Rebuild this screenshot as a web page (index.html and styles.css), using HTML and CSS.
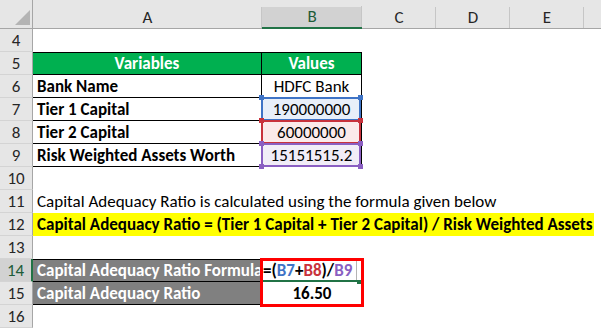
FILE: index.html
```html
<!DOCTYPE html>
<html lang="en">
<head>
  <meta charset="UTF-8" />
  <title>Capital Adequacy Ratio</title>
  <link rel="stylesheet" href="styles.css">
</head>
<body>
  <div class="sheet">
    <!-- column headers -->
    <div class="corner"><span class="tri"></span></div>
    <div class="colhead">A</div>
    <div class="colhead active">B</div>
    <div class="colhead">C</div>
    <div class="colhead">D</div>
    <div class="colhead">E</div>
    <div class="colhead last"></div>

    <div class="rowhead">4</div>
    <div class="c rest-a"></div>

    <div class="rowhead">5</div>
    <div class="c th top">Variables</div>
    <div class="c th top b">Values</div>
    <div class="c rest"></div>

    <div class="rowhead">6</div>
    <div class="c label">Bank Name</div>
    <div class="c val b">HDFC Bank</div>
    <div class="c rest"></div>

    <div class="rowhead">7</div>
    <div class="c label">Tier 1 Capital</div>
    <div class="c val b ref-cell blue-fill">190000000<span class="ref blue"><i class="tl"></i><i class="tr"></i><i class="bl"></i><i class="br"></i></span></div>
    <div class="c rest"></div>

    <div class="rowhead">8</div>
    <div class="c label">Tier 2 Capital</div>
    <div class="c val b ref-cell red-fill">60000000<span class="ref red"><i class="tl"></i><i class="tr"></i><i class="bl"></i><i class="br"></i></span></div>
    <div class="c rest"></div>

    <div class="rowhead">9</div>
    <div class="c label">Risk Weighted Assets Worth</div>
    <div class="c val b ref-cell purple-fill">15151515.2<span class="ref purple"><i class="tl"></i><i class="tr"></i><i class="bl"></i><i class="br"></i></span></div>
    <div class="c rest"></div>

    <div class="rowhead">10</div>
    <div class="c rest-a"></div>

    <div class="rowhead">11</div>
    <div class="c rest-a note">Capital Adequacy Ratio is calculated using the formula given below</div>

    <div class="rowhead">12</div>
    <div class="c rest-a"><span class="formula-note">Capital Adequacy Ratio = (Tier 1 Capital + Tier 2 Capital) / Risk Weighted Assets</span></div>

    <div class="rowhead">13</div>
    <div class="c rest-a"></div>

    <div class="rowhead active">14</div>
    <div class="c dark top">Capital Adequacy Ratio Formula</div>
    <div class="c edit">=(<span class="r-blue">B7</span>+<span class="r-red">B8</span>)/<span class="r-purple">B9</span><span class="caret"></span><span class="outline"></span><span class="handle"></span></div>
    <div class="c rest"></div>

    <div class="rowhead">15</div>
    <div class="c dark">Capital Adequacy Ratio</div>
    <div class="c result">16.50</div>
    <div class="c rest"></div>

    <div class="rowhead">16</div>
    <div class="c rest-a"></div>
  </div>
</body>
</html>
```

FILE: styles.css
```css
* {
  box-sizing: border-box;
}

body {
  margin: 0;
  background: #fff;
  font-family: Calibri, Carlito, Lato, "Liberation Sans", sans-serif;
  font-size: 17px;
  color: #000;
  overflow: hidden;
}

.sheet {
  display: grid;
  grid-template-columns: 33px 229px 100px 74px 74px 74px 1fr;
  grid-template-rows: 29px;
  grid-auto-rows: 23px;
  width: 601px;
}

/* headers */
.corner {
  background: #e6e6e6;
  border-right: 1px solid #a6a6a6;
  border-bottom: 1px solid #a6a6a6;
  display: flex;
  justify-content: flex-end;
  align-items: flex-end;
  padding: 0 2px 3px 0;
}

.tri {
  width: 0;
  height: 0;
  border-left: 15px solid transparent;
  border-bottom: 15px solid #b4b4b4;
}

.colhead {
  background: linear-gradient(#c6c6c6, #c6c6c6) right bottom / 1px 21px no-repeat, #e6e6e6;
  border-bottom: 1px solid #a6a6a6;
  display: flex;
  align-items: center;
  justify-content: center;
  padding-top: 6px;
  color: #262626;
}

.colhead.active {
  background: linear-gradient(#c6c6c6, #c6c6c6) right bottom / 1px 21px no-repeat,
              linear-gradient(#e6e6e6 7px, #d2d2d2 7px);
  border-bottom: 2px solid #217346;
  color: #1e5c38;
}

.colhead.last {
  background: #e6e6e6;
}

.rowhead {
  background: #e6e6e6;
  border-right: 1px solid #a6a6a6;
  border-bottom: 1px solid #d4d4d4;
  display: flex;
  align-items: center;
  justify-content: center;
  color: #262626;
}

.rowhead.active {
  background: #d2d2d2;
  border-right: 2px solid #217346;
  color: #1e5c38;
}

/* cells */
.c {
  display: flex;
  align-items: center;
  padding: 0 4px;
  white-space: nowrap;
  overflow: hidden;
  position: relative;
}

.rest {
  grid-column: 3 / -1;
}

.c.b ~ .rest,
.edit ~ .rest,
.result ~ .rest {
  grid-column: 4 / -1;
}

.rest-a {
  grid-column: 2 / -1;
  padding: 0;
}

.th {
  background: #00b050;
  color: #fff;
  font-weight: bold;
  justify-content: center;
  border-bottom: 1px solid #000;
  border-right: 1px solid #000;
}

.top {
  border-top: 1px solid #000;
}

.label {
  font-weight: bold;
  border-bottom: 1px solid #000;
  border-right: 1px solid #000;
}

.val {
  justify-content: center;
  border-bottom: 1px solid #000;
  border-right: 1px solid #000;
}

.ref-cell {
  overflow: visible;
}

.blue-fill { background: #e8eff9; }
.red-fill { background: #fbeaea; }
.purple-fill { background: #f1edf7; }

.ref {
  position: absolute;
  top: -1px;
  left: -1px;
  right: 0;
  bottom: -1px;
  border: 2px solid;
  z-index: 1;
}

.ref i {
  position: absolute;
  width: 5px;
  height: 5px;
  background: currentColor;
}

.ref .tl { top: -4px; left: -4px; }
.ref .tr { top: -4px; right: -4px; }
.ref .bl { bottom: -4px; left: -4px; }
.ref .br { bottom: -4px; right: -4px; }

.blue { color: #3f74c6; }
.red { color: #c8323c; }
.purple { color: #8a5fc2; }

.ref.red { z-index: 2; }
.ref.purple { z-index: 3; }

.note {
  padding-left: 4px;
  overflow: visible;
}

.formula-note {
  display: flex;
  align-items: center;
  height: 100%;
  margin-right: 7px;
  padding-left: 4px;
  background: #ffff00;
  font-weight: bold;
  flex: 1;
}

.dark {
  background: #808080;
  color: #fff;
  font-weight: bold;
  border-bottom: 1px solid #000;
  border-right: 1px solid #000;
}

.edit {
  font-weight: bold;
  padding-left: 1px;
  overflow: visible;
}

.r-blue { color: #3f74c6; }
.r-red { color: #c8323c; }
.r-purple { color: #8a5fc2; }

.caret {
  width: 1px;
  height: 19px;
  margin-left: 4px;
  background: #b4b4b4;
}

.edit .outline {
  position: absolute;
  top: -1px;
  left: -2px;
  width: 104px;
  height: 49px;
  border: 3px solid #ff0000;
  z-index: 4;
}

.edit::after {
  content: "";
  position: absolute;
  left: 1px;
  right: 3px;
  bottom: 0;
  height: 2px;
  background: #217346;
}

.handle {
  position: absolute;
  right: 1px;
  bottom: -2px;
  width: 4px;
  height: 4px;
  background: #217346;
  z-index: 5;
}

.result {
  font-weight: bold;
  justify-content: center;
}
```
